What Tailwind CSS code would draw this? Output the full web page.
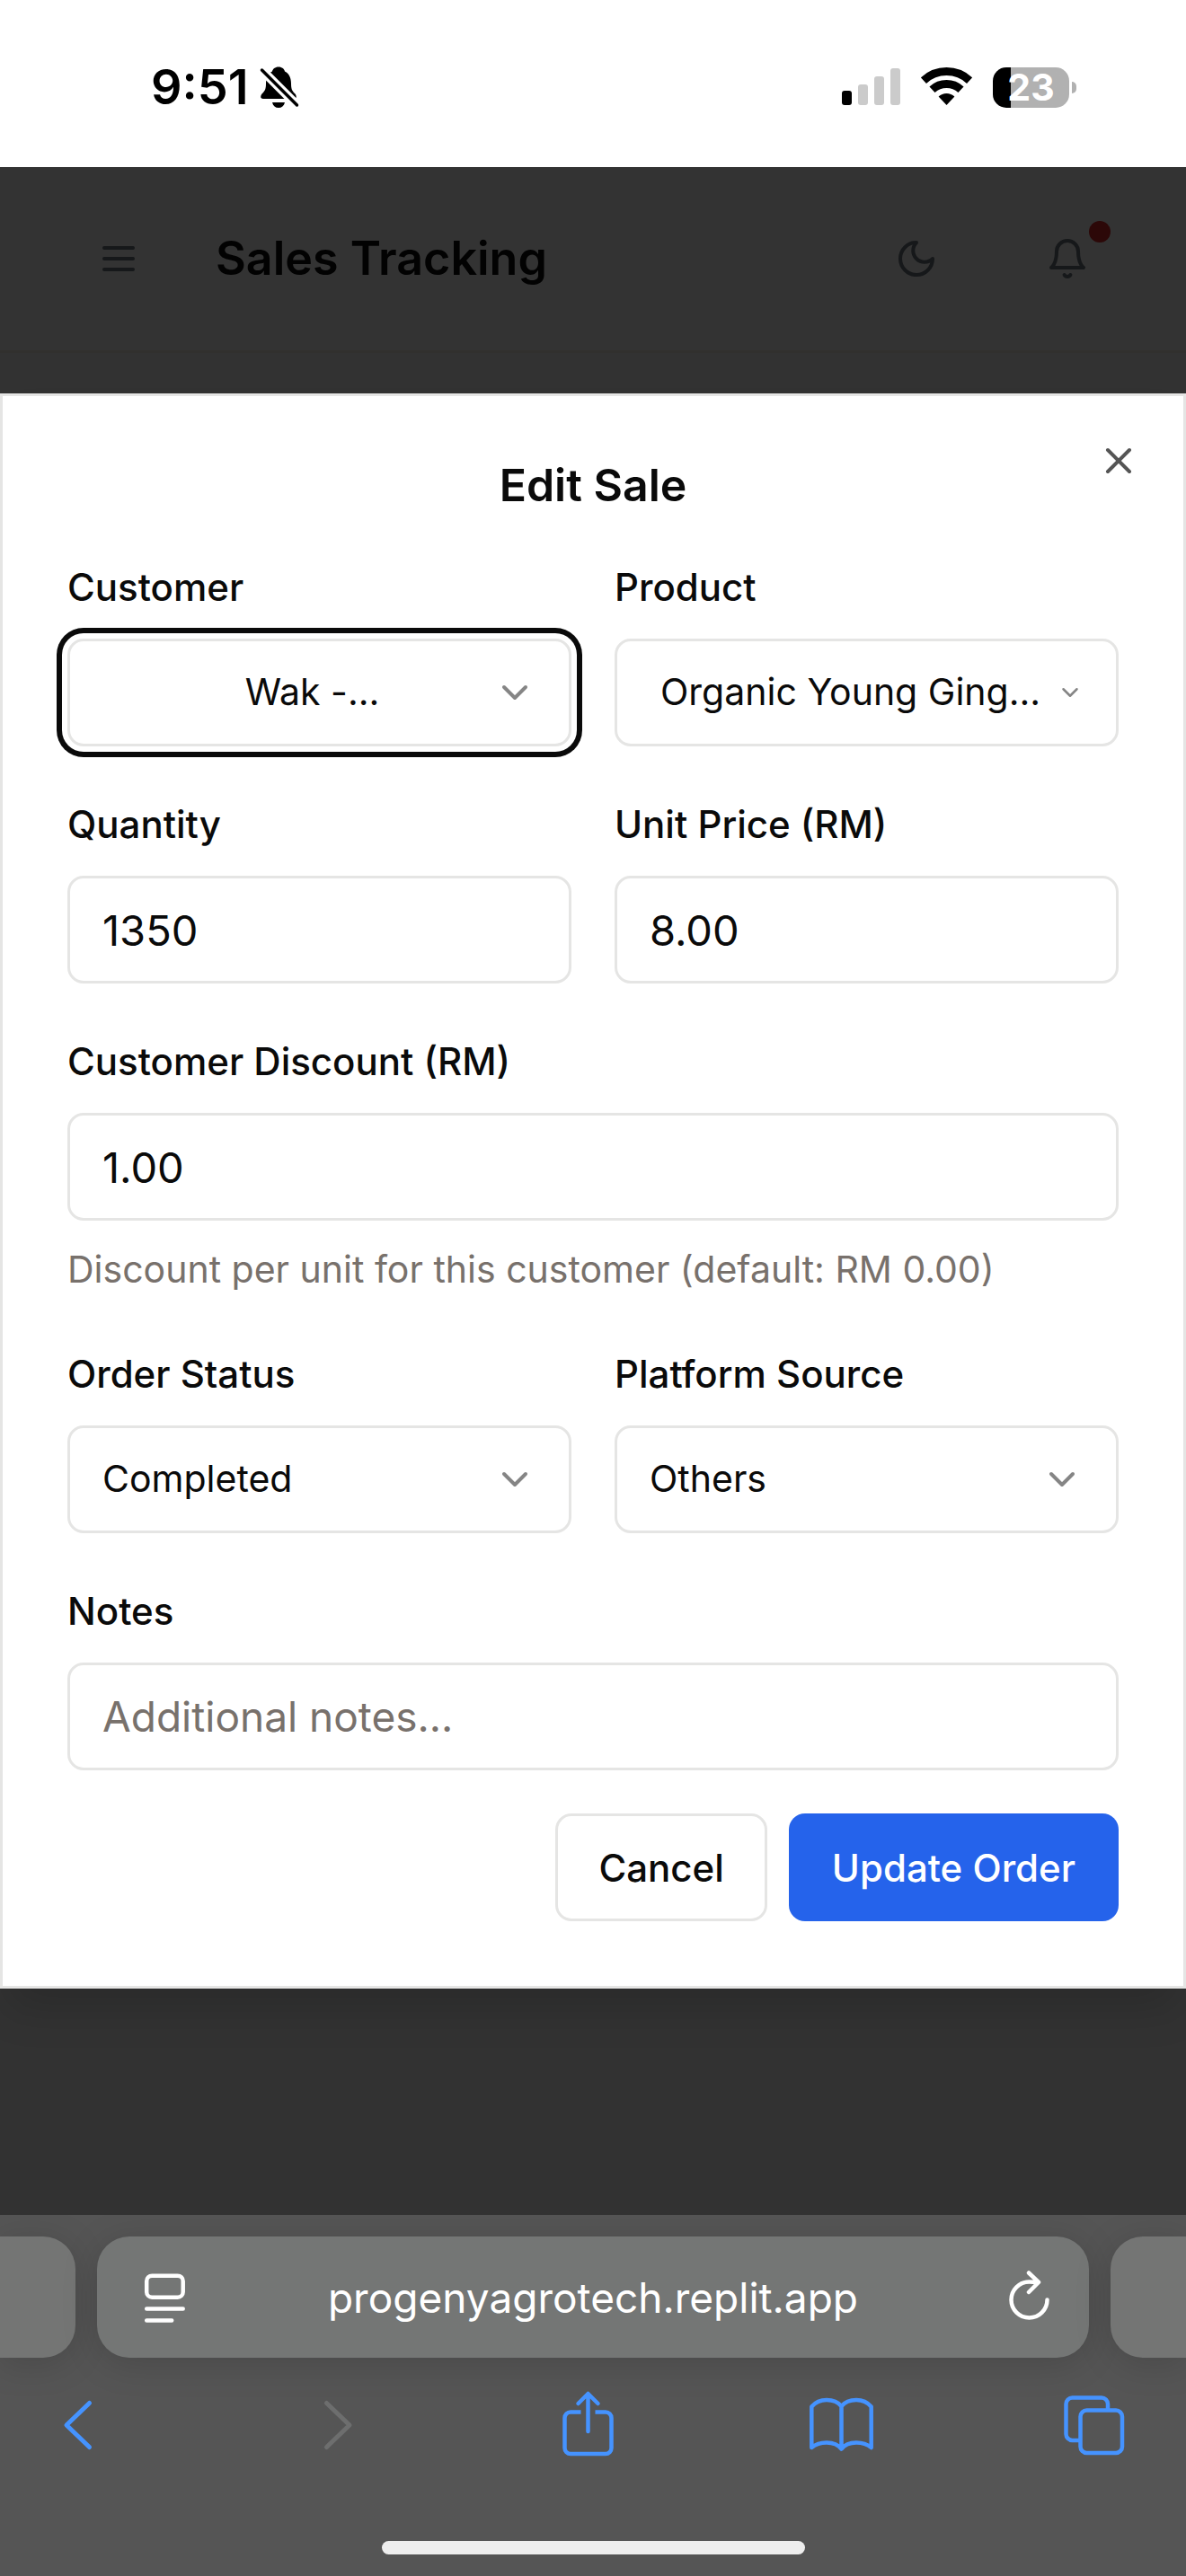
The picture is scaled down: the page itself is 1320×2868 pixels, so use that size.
<!DOCTYPE html>
<html lang="en">
<head>
<meta charset="utf-8">
<meta name="viewport" content="width=device-width, initial-scale=1">
<title>Sales Tracking</title>
<script src="https://cdn.jsdelivr.net/npm/@tailwindcss/browser@4"></script>
</head>
<body class="flex min-h-screen flex-col bg-[#323232] font-['Inter',sans-serif] text-[#0a0a0a]">

  <!-- Phone status bar -->
  <div class="flex h-[186px] items-center justify-between bg-white pt-2 pr-[122px] pl-[168px] text-black">
    <div class="flex items-center gap-3">
      <span class="text-[54px] leading-none font-semibold">9:51</span>
      <svg class="h-12 w-11" viewBox="0 0 44 48" aria-label="Silent mode">
        <path d="M21 1.5c-4 0-6.5 2.5-7 5C9 9 7 14 7 20c0 6-1 8-4 11-2 2-3 6 1 6h34c4 0 3-4 1-6-3-3-4-5-4-11 0-6-2-11-7-13.500-.5-2.500-3-5-7-5zM14 41h14c-1 4-3.500 6-7 6s-6-2-7-6z"/>
        <path d="M2 4.500L42 44.500" stroke="#fff" stroke-width="10"/>
        <path d="M2.500 5L41.500 44" stroke="#000" stroke-width="3.500" stroke-linecap="round"/>
      </svg>
    </div>
    <div class="flex items-center">
      <svg class="h-[42px] w-[65px]" viewBox="0 0 65 42" aria-label="Signal">
        <rect x="0" y="25" width="11" height="16" rx="3"/>
        <g fill="#cbcbcb"><rect x="18" y="18" width="11" height="23" rx="3"/><rect x="36" y="9" width="11" height="32" rx="3"/><rect x="54" y="0" width="11" height="41" rx="3"/></g>
      </svg>
      <svg class="ml-[23px] h-[44px] w-[57px]" viewBox="0 0 57 44" aria-label="Wi-Fi">
        <g fill="none" stroke="#000" stroke-width="9"><path d="M2.900 14.600A37.500 37.500 0 0 1 54.100 14.600"/><path d="M12.500 24.800A23.500 23.500 0 0 1 44.500 24.800"/></g>
        <path d="M28.500 42L19.600 32.500A13 13 0 0 1 37.400 32.500Z"/>
      </svg>
      <div class="ml-[23px] flex items-center gap-[3px]">
        <span class="flex h-[45px] w-[85px] items-center justify-center rounded-[15px] bg-linear-to-r from-black from-[24%] to-[#b1b1b1] to-[24%] text-[41px] leading-none font-bold text-white">23</span>
        <span class="h-[13px] w-[5px] rounded-r-full bg-[#b1b1b1]"></span>
      </div>
    </div>
  </div>

  <header class="flex items-center border-b-3 border-[#31302e] bg-[#333333] px-[72px] py-[42px] text-[#16181a]">
    <button class="flex size-[120px] items-center justify-center" aria-label="Menu">
      <svg class="size-12" viewBox="0 0 24 24" fill="none" stroke="currentColor" stroke-width="2" stroke-linecap="round"><path d="M4 6h16M4 12h16M4 18h16"/></svg>
    </button>
    <h1 class="ml-12 flex-1 text-[52px] leading-none font-semibold text-[#020202]">Sales Tracking</h1>
    <button class="flex size-[120px] items-center justify-center" aria-label="Dark mode">
      <svg class="size-12" viewBox="0 0 24 24" fill="none" stroke="currentColor" stroke-width="2" stroke-linecap="round" stroke-linejoin="round"><path d="M12 3a6 6 0 0 0 9 9 9 9 0 1 1-9-9Z"/></svg>
    </button>
    <button class="relative ml-12 flex size-[120px] items-center justify-center" aria-label="Notifications">
      <svg class="size-12" viewBox="0 0 24 24" fill="none" stroke="currentColor" stroke-width="2" stroke-linecap="round" stroke-linejoin="round"><path d="M6 8a6 6 0 0 1 12 0c0 7 3 9 3 9H3s3-2 3-9"/><path d="M10.300 21a1.940 1.940 0 0 0 3.400 0"/></svg>
      <span class="absolute top-[18px] right-3 size-6 rounded-full bg-[#2c0808]"></span>
    </button>
  </header>

  <main class="flex-1 pt-[45px]">
    <section role="dialog" aria-labelledby="dialog-title" class="relative border-3 border-[#e5e5e4] bg-white p-[72px] shadow-[0_30px_45px_-9px_rgb(0_0_0/0.15)]">
      <h2 id="dialog-title" class="text-center text-[50px] leading-[54px] font-semibold">Edit Sale</h2>
      <button class="absolute top-12 right-12 text-[#555555]" aria-label="Close">
        <svg class="size-12" viewBox="0 0 24 24" fill="none" stroke="currentColor" stroke-width="2" stroke-linecap="round"><path d="M18 6 6 18M6 6l12 12"/></svg>
      </button>

      <form class="mt-12 flex flex-col gap-12">
        <div class="grid grid-cols-2 gap-12">
          <div class="flex flex-col gap-6">
            <label for="customer" class="pt-1.5 text-[42px] leading-[66px] font-medium">Customer</label>
            <div class="relative">
              <select id="customer" class="h-[120px] w-full appearance-none rounded-[18px] border-3 border-[#e5e5e4] bg-white pr-14 pl-10 text-[41px] ring-[6px] ring-[#0a0a0a] ring-offset-[6px] ring-offset-white outline-none [text-align-last:center]"><option>Wak -...</option></select>
              <svg class="pointer-events-none absolute top-9 right-[39px] size-12" viewBox="0 0 24 24" fill="none" stroke="#858585" stroke-width="2" stroke-linecap="round" stroke-linejoin="round"><path d="m6 9 6 6 6-6"/></svg>
            </div>
          </div>
          <div class="flex flex-col gap-6">
            <label for="product" class="pt-1.5 text-[42px] leading-[66px] font-medium">Product</label>
            <div class="relative">
              <select id="product" class="h-[120px] w-full appearance-none rounded-[18px] border-3 border-[#e5e5e4] bg-white pr-[84px] pl-12 text-[41px] outline-none [text-align-last:center]"><option>Organic Young Ging...</option></select>
              <svg class="pointer-events-none absolute top-9 right-[39px] h-12 w-[30px]" viewBox="0 0 24 24" fill="none" stroke="#858585" stroke-width="2" stroke-linecap="round" stroke-linejoin="round"><path d="m6 9 6 6 6-6"/></svg>
            </div>
          </div>
        </div>

        <div class="grid grid-cols-2 gap-12">
          <div class="flex flex-col gap-6">
            <label for="quantity" class="pt-1.5 text-[42px] leading-[66px] font-medium">Quantity</label>
            <input id="quantity" type="text" inputmode="numeric" value="1350" class="h-[120px] w-full rounded-[18px] border-3 border-[#e5e5e4] bg-white px-9 text-[47px] outline-none">
          </div>
          <div class="flex flex-col gap-6">
            <label for="price" class="pt-1.5 text-[42px] leading-[66px] font-medium">Unit Price (RM)</label>
            <input id="price" type="text" inputmode="decimal" value="8.00" class="h-[120px] w-full rounded-[18px] border-3 border-[#e5e5e4] bg-white px-9 text-[47px] outline-none">
          </div>
        </div>

        <div class="flex flex-col gap-6">
          <label for="discount" class="pt-1.5 text-[42px] leading-[66px] font-medium">Customer Discount (RM)</label>
          <input id="discount" type="text" inputmode="decimal" value="1.00" aria-describedby="discount-help" class="h-[120px] w-full rounded-[18px] border-3 border-[#e5e5e4] bg-white px-9 text-[47px] outline-none">
          <p id="discount-help" class="text-[41px] leading-[60px] text-[#78716c]">Discount per unit for this customer (default: RM 0.00)</p>
        </div>

        <div class="grid grid-cols-2 gap-12">
          <div class="flex flex-col gap-6">
            <label for="status" class="pt-1.5 text-[42px] leading-[66px] font-medium">Order Status</label>
            <div class="relative">
              <select id="status" class="h-[120px] w-full appearance-none rounded-[18px] border-3 border-[#e5e5e4] bg-white px-9 text-[41px] outline-none"><option>Completed</option></select>
              <svg class="pointer-events-none absolute top-9 right-[39px] size-12" viewBox="0 0 24 24" fill="none" stroke="#858585" stroke-width="2" stroke-linecap="round" stroke-linejoin="round"><path d="m6 9 6 6 6-6"/></svg>
            </div>
          </div>
          <div class="flex flex-col gap-6">
            <label for="platform" class="pt-1.5 text-[42px] leading-[66px] font-medium">Platform Source</label>
            <div class="relative">
              <select id="platform" class="h-[120px] w-full appearance-none rounded-[18px] border-3 border-[#e5e5e4] bg-white px-9 text-[41px] outline-none"><option>Others</option></select>
              <svg class="pointer-events-none absolute top-9 right-[39px] size-12" viewBox="0 0 24 24" fill="none" stroke="#858585" stroke-width="2" stroke-linecap="round" stroke-linejoin="round"><path d="m6 9 6 6 6-6"/></svg>
            </div>
          </div>
        </div>

        <div class="flex flex-col gap-6">
          <label for="notes" class="pt-1.5 text-[42px] leading-[66px] font-medium">Notes</label>
          <input id="notes" type="text" placeholder="Additional notes..." class="h-[120px] w-full rounded-[18px] border-3 border-[#e5e5e4] bg-white px-9 text-[46px] outline-none placeholder:text-[#78716c]">
        </div>

        <div class="flex justify-end gap-6">
          <button type="button" class="h-[120px] rounded-[18px] border-3 border-[#e5e5e4] bg-white px-[45px] text-[42px] font-medium">Cancel</button>
          <button type="submit" class="h-[120px] rounded-[18px] bg-[#2563eb] px-12 text-[42px] font-medium text-white">Update Order</button>
        </div>
      </form>
    </section>
  </main>

  <!-- Browser address bar and toolbar -->
  <footer class="overflow-hidden bg-[#555555] pt-6 pb-6">
    <div class="flex gap-6">
      <div class="h-[135px] w-[84px] rounded-r-[36px] bg-[#747574] shadow-[0_6px_40px_rgb(0_0_0/0.15)]"></div>
      <div class="flex h-[135px] flex-1 items-center justify-between rounded-[36px] bg-[#747675] px-[42px] text-white shadow-[0_6px_40px_rgb(0_0_0/0.15)]">
        <button aria-label="Page settings">
          <svg class="h-[60px] w-[66px]" viewBox="0 0 66 60" fill="none" stroke="currentColor" stroke-width="4.500" stroke-linecap="round"><rect x="13.200" y="5.700" width="40.500" height="24" rx="6"/><path d="M13.200 42.500h40.500M13.200 55.500h28"/></svg>
        </button>
        <a href="#" class="text-[46px] leading-none">progenyagrotech.replit.app</a>
        <button aria-label="Reload">
          <svg class="h-[60px] w-[66px]" viewBox="-8 0 66 60" fill="none" stroke="currentColor" stroke-width="4.500" stroke-linecap="round" stroke-linejoin="round"><path d="M53.500 32.500a20 20 0 1 1-20-20c3 0 6 .3 9 1M33 2.500l11 10.500-11 11"/></svg>
        </button>
      </div>
      <div class="h-[135px] w-[84px] rounded-l-[36px] bg-[#747574] shadow-[0_6px_40px_rgb(0_0_0/0.15)]"></div>
    </div>
    <nav class="mt-[35px] flex justify-between pr-[62px] pl-[46px] text-[#4593ff]" aria-label="Browser toolbar">
      <button aria-label="Back">
        <svg class="size-20" viewBox="0 0 80 80" fill="none" stroke="currentColor" stroke-width="5" stroke-linecap="round" stroke-linejoin="round"><path d="M53.500 15.500L28 40l25.500 24.500"/></svg>
      </button>
      <button aria-label="Forward" class="text-[#6d6e6e]" disabled>
        <svg class="size-20" viewBox="0 0 80 80" fill="none" stroke="currentColor" stroke-width="5" stroke-linecap="round" stroke-linejoin="round"><path d="M34.500 15.500L60 40 34.500 64.500"/></svg>
      </button>
      <button aria-label="Share">
        <svg class="size-20" viewBox="0 0 80 80" fill="none" stroke="currentColor" stroke-width="4.500" stroke-linejoin="round"><path d="M34.500 25.500H23a6.500 6.500 0 0 0-6.500 6.500v33.500a6.500 6.500 0 0 0 6.500 6.500h39a6.500 6.500 0 0 0 6.500-6.500V32a6.500 6.500 0 0 0-6.500-6.500H50.500"/><path d="M42.500 47V5.500M31.500 16l11-11 11 11" stroke-linecap="round"/></svg>
      </button>
      <button aria-label="Bookmarks">
        <svg class="size-20" viewBox="0 0 80 80" fill="none" stroke="currentColor" stroke-width="4.500" stroke-linecap="round" stroke-linejoin="round"><path d="M41.500 19C37.500 14 31.500 12 25 12S12.500 14.500 8.300 19.500V65C12.500 61.500 18 59.500 25 59.500s13 2.500 16.500 7C45 62 51 59.500 58 59.500S70.500 61.500 74.700 65V19.500C70.500 14.500 64.500 12 58 12s-12.500 2-16.500 7zV66"/></svg>
      </button>
      <button aria-label="Tabs">
        <svg class="size-20" viewBox="0 0 80 80" fill="none" stroke="currentColor" stroke-width="4.500"><rect x="24.500" y="23.500" width="46.500" height="47.500" rx="7"/><path d="M24.500 57H15.500a7 7 0 0 1-7-7V16.500a7 7 0 0 1 7-7H48a7 7 0 0 1 7 7V23.500"/></svg>
      </button>
    </nav>
    <div class="mx-auto mt-[89px] h-[15px] w-[471px] rounded-full bg-[#eeeeee]"></div>
  </footer>
</body>
</html>
